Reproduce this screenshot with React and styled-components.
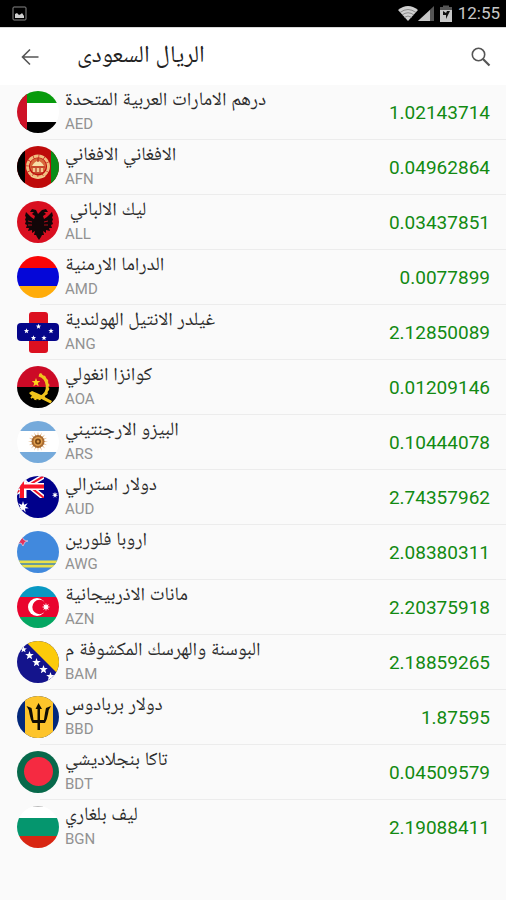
import React from "react";
import styled, { createGlobalStyle } from "styled-components";

const GlobalStyle = createGlobalStyle`
  *, *::before, *::after { box-sizing: border-box; }
  body {
    margin: 0;
    background: #fafafa;
    font-family: Roboto, "Noto Naskh Arabic UI", "Noto Naskh Arabic", "DejaVu Sans", sans-serif;
  }
`;

const StatusBar = styled.div`
  display: flex;
  align-items: center;
  justify-content: space-between;
  height: 27px;
  padding: 0 6px 0 12px;
  background: #000;
  color: #c8c8c8;
`;

const StatusGroup = styled.div`
  display: flex;
  align-items: center;
`;

const BatterySlot = styled.span`
  display: flex;
  margin-left: 6px;
`;

const Clock = styled.time`
  margin-left: 6px;
  font-size: 17px;
  line-height: 27px;
`;

const AppBar = styled.header`
  display: flex;
  align-items: center;
  height: 58px;
  padding: 0 13px 0 18px;
  background: #fff;
  border-top: 1px solid #d8d8d8;
`;

const IconButton = styled.button`
  display: flex;
  padding: 0;
  border: 0;
  background: none;
  color: #555;
  cursor: pointer;
`;

const Title = styled.h1`
  flex: 1;
  margin: 0 0 0 35px;
  font-size: 24px;
  font-weight: 400;
  line-height: 36px;
  color: #222;
  text-align: left;
`;

const RateList = styled.ul`
  margin: 0;
  padding: 0;
  list-style: none;
`;

const Item = styled.li`
  &:not(:last-child)::after {
    content: "";
    display: block;
    height: 1px;
    margin-left: 40px;
    background: #ececec;
  }
`;

const Row = styled.div`
  display: flex;
  align-items: center;
  height: 54px;
  padding: 0 16px 0 17px;
`;

const Flag = styled.svg`
  flex: none;
  width: 42px;
  height: 42px;
  border-radius: ${(p) => (p.$square ? "0" : "50%")};
`;

const Labels = styled.div`
  flex: 1;
  min-width: 0;
  margin-left: 6px;
`;

const Name = styled.div`
  font-size: 19px;
  line-height: 24px;
  color: #2c2c2c;
  text-align: left;
  white-space: pre;
`;

const Code = styled.div`
  font-size: 15px;
  line-height: 20px;
  color: #929292;
`;

const Rate = styled.span`
  padding-top: 2px;
  font-size: 19px;
  line-height: 24px;
  color: #128a12;
`;

const star = (cx, cy, r, n = 5) =>
  Array.from({ length: n * 2 }, (_, i) => {
    const a = (Math.PI * i) / n - Math.PI / 2;
    const d = i % 2 ? r * 0.42 : r;
    return `${(cx + d * Math.cos(a)).toFixed(2)},${(cy + d * Math.sin(a)).toFixed(2)}`;
  }).join(" ");

const Star = ({ x, y, r, n, fill = "#fff" }) => <polygon points={star(x, y, r, n)} fill={fill} />;

const Stripes = ({ colors, cuts }) =>
  colors.map((c, i) => (
    <rect key={c + i} x="0" width="42" y={cuts[i]} height={cuts[i + 1] - cuts[i]} fill={c} />
  ));

const flags = {
  AED: (
    <>
      <Stripes colors={["#079a0c", "#fff", "#000"]} cuts={[0, 12, 31, 42]} />
      <rect width="10" height="42" fill="#ce1126" />
    </>
  ),
  AFN: (
    <>
      <rect width="42" height="42" fill="#be0a0a" />
      <rect width="8" height="42" fill="#000" />
      <rect x="34" width="8" height="42" fill="#098c16" />
      <circle cx="21" cy="20.500" r="10.500" fill="none" stroke="#f0bf80" strokeWidth="3" strokeDasharray="5 0.600" />
      <circle cx="21" cy="20" r="8" fill="#d8683c" />
      <path d="M16 22h10v4H16z" fill="#f4c890" />
      <path d="M15 20q6-10 12 0z" fill="#f7dfa8" />
      <path d="M14 21h14M19 22v4M23 22v4M21 12v4M16 27h10" stroke="#b5281c" strokeWidth="1.200" fill="none" />
      <path d="M14 30q7 4 14 0" stroke="#f0c88c" strokeWidth="2" fill="none" />
    </>
  ),
  ALL: (
    <>
      <rect width="42" height="42" fill="#d90f20" />
      <path
        d="M21 13l-2-4-4-1-2 3 4 0-2 2 3 2-1 3-3-2-5-5-1 4 1 1-1 3 1 1-1 3 2 1-1 3 3 0-1 3 4-1 0 3 3-2-1 4 2 0 1 2 2 3 2-3 1-2 2 0-1-4 3 2 0-3 4 1-1-3 3 0-1-3 2-1-1-3 1-1-1-3 1-1-1-4-5 5-3 2-1-3 3-2-2-2 4 0-2-3-4 1z"
        fill="#120608"
      />
      <path d="M11 20l4 1M11 24l4 0M31 20l-4 1M31 24l-4 0" stroke="#d90f20" strokeWidth="0.800" />
    </>
  ),
  AMD: <Stripes colors={["#f90505", "#0507d8", "#ffac0a"]} cuts={[0, 12, 30, 42]} />,
  ANG: (
    <>
      <rect x="12" y="1" width="19" height="41" rx="3" fill="#dc1020" />
      <rect x="0" y="12" width="42" height="18" rx="4" fill="#05058a" />
      <Star x={9.5} y={20} r={2.8} />
      <Star x={21.5} y={15.5} r={2.8} />
      <Star x={34} y={20} r={2.8} />
      <Star x={16.5} y={27} r={2.8} />
      <Star x={27} y={27} r={2.8} />
    </>
  ),
  AOA: (
    <>
      <Stripes colors={["#cc0a26", "#000"]} cuts={[0, 21, 42]} />
      <path d="M22 9A12 12 0 0 1 24 31Q19 33 15 30" fill="none" stroke="#f0c41c" strokeWidth="3" />
      <path d="M23 8A13.500 13.500 0 0 1 25 32Q19 35 14 31" fill="none" stroke="#f0c41c" strokeWidth="2" strokeDasharray="2.200 2.200" />
      <path d="M12 27l3-2q5 2 9 4l11 6-1.500 2.500-12-6q-6 0-9.500-4.500z" fill="#f0c41c" />
      <Star x={19} y={16.500} r={4.5} fill="#ffd21c" />
    </>
  ),
  ARS: (
    <>
      <Stripes colors={["#75aadb", "#fff", "#75aadb"]} cuts={[0, 10, 31, 42]} />
      <Star x={21} y={20.500} r={10} n={16} fill="#dca870" />
      <circle cx="21" cy="20.500" r="6.500" fill="#a86a30" />
      <circle cx="21" cy="20.500" r="4.500" fill="#e0a050" />
      <circle cx="21" cy="20.500" r="3" fill="#7c4a18" />
      <circle cx="21" cy="20.500" r="1.200" fill="#e0a050" />
    </>
  ),
  AUD: (
    <>
      <rect width="42" height="42" fill="#00008b" />
      <svg width="27" height="22" viewBox="0 0 27 22">
        <path d="M-10 -8L27 22M-10 22L27 0" stroke="#fff" strokeWidth="5" />
        <path d="M-10 -8L27 22M-10 22L27 0" stroke="#f01428" strokeWidth="2" />
        <path d="M6 0V22M0 10.500H27" stroke="#fff" strokeWidth="7" />
        <path d="M5 0V22M0 10.500H27" stroke="#fa1428" strokeWidth="4" />
      </svg>
      <Star x={6} y={31} r={6} n={7} />
      <Star x={38} y={19} r={3.2} n={7} />
    </>
  ),
  AWG: (
    <>
      <rect width="42" height="42" fill="#4189dd" />
      <path d="M0 29.500H42V32H0zM0 34H42V36.500H0z" fill="#e8e04a" />
      <path d="M0 32H42V34H0z" fill="#6b9c98" />
      <path d="M5 6l2 3 4 1-3 1-2 4-2-3-4 1z" fill="#e4325c" stroke="#fff" strokeWidth="0.500" />
    </>
  ),
  AZN: (
    <>
      <Stripes colors={["#0798c3", "#e9042e", "#04a662"]} cuts={[0, 11, 31, 42]} />
      <circle cx="20" cy="21" r="9" fill="#fff" />
      <circle cx="22.500" cy="21" r="7.200" fill="#e9042e" />
      <Star x={29} y={21} r={4.2} n={8} />
    </>
  ),
  BAM: (
    <>
      <rect width="42" height="42" fill="#14148c" />
      <path d="M8 0H42V34z" fill="#fccb0a" />
      <Star x={6.5} y={8.500} r={3.5} />
      <Star x={12.500} y={14.500} r={4.5} />
      <Star x={19.500} y={21.500} r={4.5} />
      <Star x={26.500} y={28.500} r={4.5} />
      <Star x={33.500} y={35.500} r={4.5} />
    </>
  ),
  BBD: (
    <>
      <rect width="42" height="42" fill="#03287c" />
      <rect x="8" width="28" height="42" fill="#fdc42b" />
      <path
        d="M21.500 7l-3 6 2 0v11h-4q-1-8-2-12l-5-2q3 4 3 8 1 6 3 9h5v7h2.500v-7h5q2-3 3-9 0-4 3-8l-5 2q-1 4-2 12h-4V13l2 0z"
        fill="#100c05"
      />
    </>
  ),
  BDT: (
    <>
      <rect width="42" height="42" fill="#07694b" />
      <circle cx="21.500" cy="20.500" r="14.500" fill="#f52a41" />
    </>
  ),
  BGN: (
    <>
      <Stripes colors={["#fff", "#05966e", "#d82612"]} cuts={[0, 12, 30, 42]} />
      <path d="M16 0.500h10" stroke="#bbb" />
    </>
  ),
};

const rates = [
  ["AED", "درهم الامارات العربية المتحدة", "1.02143714"],
  ["AFN", "الافغاني الافغاني", "0.04962864"],
  ["ALL", "ليك الالباني\u00a0", "0.03437851"],
  ["AMD", "الدراما الارمنية", "0.0077899"],
  ["ANG", "غيلدر الانتيل الهولندية", "2.12850089"],
  ["AOA", "كوانزا انغولي", "0.01209146"],
  ["ARS", "البيزو الارجنتيني", "0.10444078"],
  ["AUD", "دولار استرالي", "2.74357962"],
  ["AWG", "اروبا فلورين", "2.08380311"],
  ["AZN", "مانات الاذربيجانية", "2.20375918"],
  ["BAM", "البوسنة والهرسك المكشوفة م", "2.18859265"],
  ["BBD", "دولار بربادوس", "1.87595"],
  ["BDT", "تاكا بنجلاديشي", "0.04509579"],
  ["BGN", "ليف بلغاري", "2.19088411"],
];

const PictureIcon = () => (
  <svg width="15" height="15" viewBox="0 0 15 15" aria-hidden="true">
    <rect x="1" y="1" width="13" height="13" rx="1" fill="none" stroke="#888" />
    <path d="M3 12V8l2-1 2 2 2-1 1-1 2 3v2z" fill="#d0d0d0" />
  </svg>
);

const WifiIcon = () => (
  <svg width="20" height="15" viewBox="0 0 20 15" aria-hidden="true">
    <path d="M0 4Q10-4 20 4L10 15z" fill="#d0d0d0" />
    <path d="M2 6.500Q10 0.500 18 6.500M4 9Q10 4.500 16 9M6 11.500Q10 8.500 14 11.500" fill="none" stroke="#777" strokeWidth="0.800" />
  </svg>
);

const SignalIcon = () => (
  <svg width="16" height="15" viewBox="0 0 16 15" aria-hidden="true">
    <path d="M0 15L16 0V15z" fill="#555" />
    <path d="M0 15L12 4V15z" fill="#c8c8c8" />
  </svg>
);

const BatteryIcon = () => (
  <svg width="12" height="17" viewBox="0 0 12 17" aria-hidden="true">
    <path d="M3 2V0.500H9V2H12V6H0V2z" fill="#555" />
    <path d="M0 5H12V17H0z" fill="#c8c8c8" />
    <path d="M3 6l3 2 1-2 3 0-4 8 0-4-3 0z" fill="#111" />
  </svg>
);

const BackIcon = () => (
  <svg width="24" height="24" viewBox="0 0 24 24" fill="none" stroke="currentColor" strokeWidth="1.600" aria-hidden="true">
    <path d="M20.500 12H5M12 4.500L4.500 12 12 19.500" />
  </svg>
);

const SearchIcon = () => (
  <svg width="24" height="24" viewBox="0 0 24 24" fill="none" stroke="currentColor" strokeWidth="1.600" aria-hidden="true">
    <circle cx="9.500" cy="9.500" r="6.200" />
    <path d="M14 14L20.500 20.500" strokeWidth="2.200" />
  </svg>
);

export default function App() {
  return (
    <>
      <GlobalStyle />
      <StatusBar>
        <PictureIcon />
        <StatusGroup>
          <WifiIcon />
          <SignalIcon />
          <BatterySlot>
            <BatteryIcon />
          </BatterySlot>
          <Clock>12:55</Clock>
        </StatusGroup>
      </StatusBar>
      <AppBar>
        <IconButton type="button" aria-label="Back">
          <BackIcon />
        </IconButton>
        <Title dir="rtl" lang="ar">الريال السعودى</Title>
        <IconButton type="button" aria-label="Search">
          <SearchIcon />
        </IconButton>
      </AppBar>
      <main>
        <RateList>
          {rates.map(([code, name, rate]) => (
            <Item key={code}>
              <Row>
                <Flag viewBox="0 0 42 42" $square={code === "ANG"} aria-hidden="true">
                  {flags[code]}
                </Flag>
                <Labels>
                  <Name dir="rtl" lang="ar">{name}</Name>
                  <Code>{code}</Code>
                </Labels>
                <Rate>{rate}</Rate>
              </Row>
            </Item>
          ))}
        </RateList>
      </main>
    </>
  );
}
